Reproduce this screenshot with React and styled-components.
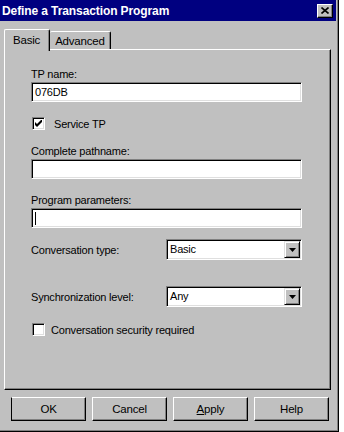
import React from "react";
import styled, { createGlobalStyle } from "styled-components";

const GRAY = "#c0c0c0";

const Global = createGlobalStyle`
  html, body {
    margin: 0;
    padding: 0;
    background: #fff;
  }
  body {
    font-family: "Liberation Sans", Arial, sans-serif;
    font-size: 11px;
    letter-spacing: -0.2px;
    color: #000;
  }
`;

const Window = styled.div`
  width: 339px;
  height: 432px;
  box-sizing: border-box;
  background: ${GRAY};
  border-right: 1px solid #000;
  border-bottom: 1px solid #000;
  box-shadow: inset -1px -1px 0 #808080;
  display: flex;
  flex-direction: column;
`;

const TitleBar = styled.div`
  height: 21px;
  margin-right: 2px;
  background: #000080;
  color: #fff;
  font-weight: bold;
  font-size: 12px;
  letter-spacing: -0.1px;
  display: flex;
  align-items: center;
  justify-content: space-between;
  padding: 0 3px 0 2px;
`;

const CloseBtn = styled.div`
  width: 16px;
  height: 14px;
  box-sizing: border-box;
  background: ${GRAY};
  border-top: 1px solid #fff;
  border-left: 1px solid #fff;
  border-right: 1px solid #000;
  border-bottom: 1px solid #000;
  box-shadow: inset -1px -1px 0 #808080;
  display: flex;
  align-items: center;
  justify-content: center;
`;

const Body = styled.div`
  flex: 1;
  display: flex;
  flex-direction: column;
  padding: 8px 7px 0 4px;
`;

const TabStrip = styled.div`
  display: flex;
  align-items: flex-end;
  height: 20px;
`;

const Tab = styled.div`
  box-sizing: border-box;
  height: ${(p) => (p.$active ? 22 : 18)}px;
  margin-bottom: ${(p) => (p.$active ? -2 : 0)}px;
  padding: ${(p) => (p.$active ? "4px 9px 0 8px" : "3px 5px 0 5px")};
  font-size: 11.5px;
  background: ${GRAY};
  border-top: 1px solid #fff;
  border-left: ${(p) => (p.$active ? "1px solid #fff" : "none")};
  border-right: 1px solid #000;
  box-shadow: inset -1px 0 0 #808080;
  border-radius: 2px 2px 0 0;
  position: relative;
  z-index: ${(p) => (p.$active ? 1 : 0)};
  white-space: nowrap;
`;

const Panel = styled.div`
  box-sizing: border-box;
  height: 341px;
  border-top: 1px solid #fff;
  border-left: 1px solid #fff;
  border-right: 1px solid #000;
  border-bottom: 1px solid #000;
  box-shadow: inset -1px -1px 0 #808080;
  padding: 17px 26px 0 26px;
  display: flex;
  flex-direction: column;
`;

const Label = styled.div`
  line-height: 15px;
  margin-top: ${(p) => p.$top || 0}px;
`;

const Field = styled.div`
  box-sizing: border-box;
  height: 20px;
  width: 271px;
  background: #fff;
  border-top: 1px solid #808080;
  border-left: 1px solid #808080;
  border-right: 1px solid #fff;
  border-bottom: 1px solid #fff;
  box-shadow: inset 1px 1px 0 #000, inset -1px -1px 0 #dfdfdf;
  padding: 2px 3px;
  line-height: 15px;
  display: flex;
  align-items: center;
  margin-top: ${(p) => p.$top || 0}px;
`;

const Caret = styled.span`
  width: 1px;
  height: 13px;
  background: #000;
`;

const CheckRow = styled.div`
  display: flex;
  align-items: center;
  gap: ${(p) => p.$gap}px;
  height: 15px;
  margin-top: ${(p) => p.$top}px;
  padding-left: 1px;
`;

const CheckBox = styled.div`
  box-sizing: border-box;
  width: 13px;
  height: 13px;
  background: #fff;
  border-top: 1px solid #808080;
  border-left: 1px solid #808080;
  border-right: 1px solid #fff;
  border-bottom: 1px solid #fff;
  box-shadow: inset 1px 1px 0 #000, inset -1px -1px 0 #dfdfdf;
  display: flex;
  align-items: center;
  justify-content: center;
`;

const ComboRow = styled.div`
  display: flex;
  align-items: center;
  margin-top: ${(p) => p.$top}px;
`;

const ComboLabel = styled.div`
  width: 135px;
`;

const Combo = styled(Field)`
  width: 136px;
  height: 21px;
  padding: 2px 2px 2px 3px;
  justify-content: space-between;
`;

const ArrowBtn = styled.div`
  box-sizing: border-box;
  width: 16px;
  height: 17px;
  margin-right: -1px;
  background: ${GRAY};
  border-top: 1px solid #dfdfdf;
  border-left: 1px solid #dfdfdf;
  border-right: 1px solid #000;
  border-bottom: 1px solid #000;
  box-shadow: inset 1px 1px 0 #fff, inset -1px -1px 0 #808080;
  display: flex;
  align-items: center;
  justify-content: center;
`;

const ButtonRow = styled.div`
  display: flex;
  gap: 6px;
  padding: 7px 0 0 7px;
`;

const Button = styled.div`
  box-sizing: border-box;
  width: 75px;
  height: 24px;
  font-size: 11.5px;
  background: ${GRAY};
  border-top: 1px solid #fff;
  border-left: 1px solid ${(p) => (p.$default ? "#000" : "#fff")};
  border-right: 1px solid #000;
  border-bottom: 1px solid #000;
  box-shadow: inset -1px -1px 0 #808080;
  display: flex;
  align-items: center;
  justify-content: center;
  u {
    text-decoration: underline;
  }
`;

function Check() {
  return (
    <svg width="7" height="7" viewBox="0 0 7 7">
      <path d="M0 2v3l2 2 5-5V-1L2 4z" fill="#000" />
    </svg>
  );
}

function DownArrow() {
  return (
    <svg width="7" height="4" viewBox="0 0 7 4">
      <path d="M0 0h7L3.5 4z" fill="#000" />
    </svg>
  );
}

function CloseX() {
  return (
    <svg width="8" height="7" viewBox="0 0 8 7">
      <path d="M0.5 0.5L7.5 6.5M7.5 0.5L0.5 6.5" stroke="#000" strokeWidth="1.6" />
    </svg>
  );
}

export default function App() {
  return (
    <>
      <Global />
      <Window>
        <TitleBar>
          <span>Define a Transaction Program</span>
          <CloseBtn>
            <CloseX />
          </CloseBtn>
        </TitleBar>
        <Body>
          <TabStrip>
            <Tab $active>Basic</Tab>
            <Tab>Advanced</Tab>
          </TabStrip>
          <Panel>
            <Label>TP name:</Label>
            <Field>076DB</Field>
            <CheckRow $top={14} $gap={9}>
              <CheckBox>
                <Check />
              </CheckBox>
              <span>Service TP</span>
            </CheckRow>
            <Label $top={13}>Complete pathname:</Label>
            <Field />
            <Label $top={14}>Program parameters:</Label>
            <Field>
              <Caret />
            </Field>
            <ComboRow $top={11}>
              <ComboLabel>Conversation type:</ComboLabel>
              <Combo>
                <span>Basic</span>
                <ArrowBtn>
                  <DownArrow />
                </ArrowBtn>
              </Combo>
            </ComboRow>
            <ComboRow $top={26}>
              <ComboLabel>Synchronization level:</ComboLabel>
              <Combo>
                <span>Any</span>
                <ArrowBtn>
                  <DownArrow />
                </ArrowBtn>
              </Combo>
            </ComboRow>
            <CheckRow $top={15} $gap={6}>
              <CheckBox />
              <span>Conversation security required</span>
            </CheckRow>
          </Panel>
          <ButtonRow>
            <Button $default>OK</Button>
            <Button>Cancel</Button>
            <Button>
              <span>
                <u>A</u>pply
              </span>
            </Button>
            <Button>Help</Button>
          </ButtonRow>
        </Body>
      </Window>
    </>
  );
}
